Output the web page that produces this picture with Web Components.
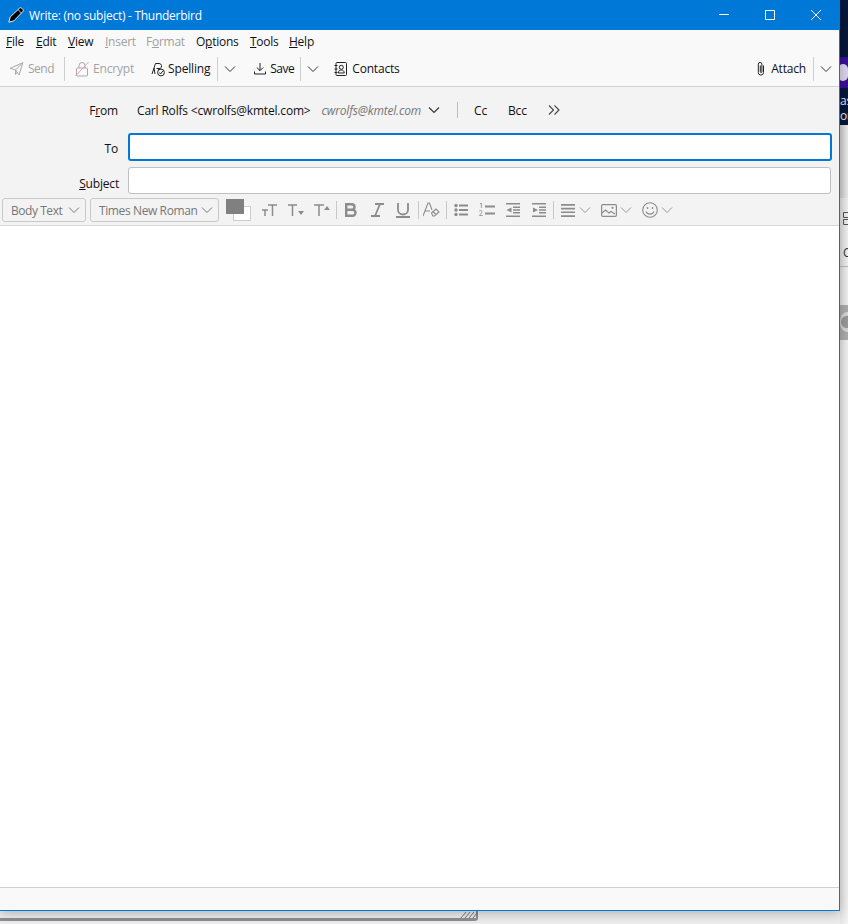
<!DOCTYPE html>
<html lang="en"><head><meta charset="utf-8"><title>Write: (no subject) - Thunderbird</title>
<style>
html,body{margin:0;padding:0;background:#e9e9e9}
body{font-family:"Open Sans","Liberation Sans",sans-serif;font-size:12px;letter-spacing:-.18px;color:#1a1a1a}
</style></head><body>
<desk-top>
  <compose-window>
    <title-bar slot="title">Write: (no subject) - Thunderbird</title-bar>
    <menu-bar slot="menu"></menu-bar>
    <compose-toolbar slot="tools"></compose-toolbar>
    <compose-headers slot="head"></compose-headers>
    <format-toolbar slot="format"></format-toolbar>
    <status-bar slot="status"></status-bar>
  </compose-window>
</desk-top>
<script>
function el(name,css,html){
  customElements.define(name,class extends HTMLElement{
    constructor(){super();const r=this.attachShadow({mode:'open'});r.innerHTML='<style>'+css+'</style>'+html;}
  });
}
const chev=(w=10,c='#333')=>`<svg width="${w+2}" height="8" viewBox="0 0 12 8" fill="none" stroke="${c}" stroke-width="1"><path d="M1 1.5 6 6.500 11 1.500"/></svg>`;

el('desk-top',`
:host{display:block;position:relative;width:848px;height:924px;overflow:hidden;background:#eeeeee}
.back{position:absolute;left:0;top:0;width:478px;height:921px;border:solid #8f8f96;border-width:0 2px 3px 0;border-radius:0 0 3px 0;box-sizing:border-box}
.grip{position:absolute;left:460px;top:911px}
.side{position:absolute;left:840px;top:0;width:8px;height:924px;background:#f3f3f3;display:flex;flex-direction:column;overflow:hidden;color:#222}
.side div{flex:none;overflow:hidden}
.navy{height:57px;background:#06173a}
.purple{height:31px;background:#3a0f99;position:relative}
.purple i{position:absolute;left:-2px;top:7px;width:10px;height:17px;border-radius:8px;background:#dcd6ee}
.txt{height:37px;background:#06173a;color:#e8e8f0;line-height:15px;padding-top:5px;box-sizing:border-box;white-space:pre}
.grad{height:73px;background:linear-gradient(90deg,#cfcfcf,#eee)}
.pale{height:69px;background:linear-gradient(90deg,#e2e2e2,#f3f3f3);padding:14px 0 0 3px;color:#333;border-bottom:1px solid #bbb;box-sizing:border-box}
.pale svg{display:block}
.pale span{display:block;margin-top:20px;line-height:16px}
.blank{height:38px;background:linear-gradient(90deg,#e2e2e2,#f3f3f3)}
.knob{height:35px;background:#adadad;position:relative}
.knob i{position:absolute;left:0;top:7px;width:14px;height:20px;border-radius:50%;background:radial-gradient(circle,#999 0 45%,#d9d9d9 55%)}
.rest{flex:1!important;background:linear-gradient(90deg,#e6e6e6,#f3f3f3)}
::slotted(*){position:absolute;left:0;top:0}
`,`<div class="back"></div>
<svg class="grip" width="18" height="8" viewBox="0 0 18 8" stroke="#777" stroke-width="1"><path d="M1 7 6 1M5 7 10 1M9 7 14 1M13 7 17 2"/></svg>
<div class="side">
<div class="navy"></div><div class="purple"><i></i></div><div class="txt">as
or</div><div class="grad"></div><div class="pale"><svg width="5" height="13" viewBox="0 0 5 13" fill="none" stroke="#555"><path d="M5 .5H.5v5H5M5 7.500H.5v5H5"/></svg><span>C</span></div><div class="blank"></div><div class="knob"><i></i></div><div class="rest"></div>
</div><slot></slot>`);

el('compose-window',`
:host{display:flex;flex-direction:column;width:840px;height:911px;box-sizing:border-box;background:#fff;border:solid #0078d7;border-width:0 1px 1px 0;box-shadow:0 2px 12px rgba(0,0,0,.28)}
.body{flex:1;background:#fff}
`,`<slot name="title"></slot><slot name="menu"></slot><slot name="tools"></slot><slot name="head"></slot><slot name="format"></slot><div class="body"></div><slot name="status"></slot>`);

el('title-bar',`
:host{display:flex;align-items:center;height:30px;background:#0078d7;color:#fff;font-size:12px;flex:none}
.ic{margin:0 5px 0 8px;flex:none;display:block}
.t{flex:1;white-space:nowrap;letter-spacing:-.27px}
.b{width:46px;height:30px;display:flex;align-items:center;justify-content:center}
`,`<svg class="ic" width="16" height="16" viewBox="0 0 16 16"><path d="M.8 15.200 2.200 10 11.500 1.200a1.600 1.600 0 0 1 2.200 0l1.100 1.100a1.600 1.600 0 0 1 0 2.200L6 13.800z" fill="#000" stroke="#fff" stroke-width=".9" stroke-linejoin="round"/><path d="M10.200 2.800 13.300 5.900" stroke="#fff" stroke-width=".8"/></svg>
<span class="t"><slot></slot></span>
<span class="b"><svg width="10" height="10" viewBox="0 0 10 10"><path d="M0 4.500h10" stroke="#fff"/></svg></span>
<span class="b"><svg width="10" height="10" viewBox="0 0 10 10"><path d="M.5.500h9v9h-9z" fill="none" stroke="#fff"/></svg></span>
<span class="b"><svg width="10" height="10" viewBox="0 0 10 10"><path d="M0 0 10 10M10 0 0 10" stroke="#fff" stroke-width="1"/></svg></span>`);

el('menu-bar',`
:host{display:grid;grid-template-columns:30px 32px 37px 41px 50px 54px 39px auto;height:22px;padding:0 0 0 6px;align-items:center;background:#f9f9f9;color:#111;flex:none;white-space:nowrap;letter-spacing:-.25px}
.d{color:#a0a0a0}
`,`<span><u>F</u>ile</span><span><u>E</u>dit</span><span><u>V</u>iew</span><span class="d"><u>I</u>nsert</span><span class="d">F<u>o</u>rmat</span><span>O<u>p</u>tions</span><span><u>T</u>ools</span><span><u>H</u>elp</span>`);

el('compose-toolbar',`
:host{display:flex;align-items:center;height:35px;box-sizing:border-box;padding:0 7px 1px 9px;background:#f9f9f9;border-bottom:1px solid #d2d2d4;color:#111;flex:none;white-space:nowrap}
.i{flex:none;display:block;margin-right:4px}
.d{color:#a3a3a3}
.n{letter-spacing:-.5px}
.s{width:1px;height:24px;background:#cfcfcf;flex:none}
.c{display:flex;flex:none}
.sp{flex:1}
`,`<svg class="i" style="margin-right:4px" width="15" height="14" viewBox="0 0 14 14" fill="none" stroke="#a8a8a8" stroke-width="1"><path d="M.7 6.300 13.300.7 9.600 13 6 8z"/><path d="M13.300.7 6 8v4.500l1.800-2.400"/></svg><span class="d n">Send</span>
<span class="s" style="margin:0 10px 0 10px"></span>
<svg class="i" width="14" height="16" viewBox="0 0 14 16" fill="none" stroke="#a8a8a8"><rect x="1.500" y="7" width="11" height="8" rx="1"/><path d="M4 7V4.500a3 3 0 0 1 6 0V7"/><path d="M.5 15 13.500 1" stroke="#eba0a8"/></svg><span class="d">Encrypt</span>
<svg class="i" style="margin-left:17px;margin-right:3px" width="14" height="16" viewBox="0 0 14 16" fill="none" stroke="#222" stroke-width="1"><path d="M1 13 4.500 2.500h3.500a2.600 2.600 0 0 1 1 5H5.500M7.500 7.500 8 9M3 7l1 6"/><circle cx="10" cy="11.500" r="3.400"/><path d="M8.300 11.500 9.600 13 11.800 10"/></svg><span>Spelling</span>
<span class="s" style="margin:0 6px 0 7px"></span><span class="c">${chev()}</span>
<svg class="i" style="margin-left:18px;margin-right:4px" width="12" height="13" viewBox="0 0 12 13" fill="none" stroke="#222"><path d="M6 1v7.500M2.800 5.500 6 8.700 9.200 5.500"/><path d="M.5 9.500v2.500h11V9.500"/></svg><span class="n">Save</span>
<span class="s" style="margin:0 6px 0 6px"></span><span class="c">${chev()}</span>
<svg class="i" style="margin-left:15px;margin-right:5px" width="13" height="14" viewBox="0 0 13 14" fill="none" stroke="#222"><rect x="2" y=".5" width="10.500" height="13" rx="1"/><path d="M.5 3.500H3.500M.5 7H3.500M.5 10.500H3.500"/><circle cx="7.300" cy="5.300" r="2"/><path d="M4.300 11c0-4 6-4 6 0z"/></svg><span>Contacts</span>
<span class="sp"></span>
<svg class="i" style="margin-right:5px" width="10" height="15" viewBox="0 0 10 15" fill="none" stroke="#222"><path d="M7.500 4.500v7a2.600 2.600 0 0 1-5.200 0V3.200a1.800 1.800 0 0 1 3.600 0v7.500a.8.8 0 0 1-1.600 0V4.500"/></svg><span>Attach</span>
<span class="s" style="margin:0 6px 0 7px"></span><span class="c">${chev()}</span>`);

el('compose-headers',`
:host{display:block;background:#f3f3f3;padding:10px 8px 0 0;flex:none;color:#111;white-space:nowrap}
.r{display:flex;align-items:center}
.l{width:118px;text-align:right;flex:none}
.from{height:26px;margin-bottom:10px}
.v{margin-left:19px;flex:none}
.m{margin-left:11px;font-style:italic;color:#767676;flex:none}
.s{width:1px;height:16px;background:#bbb;margin:0 16px 0 17px;flex:none}
.e{display:block;box-sizing:border-box;background:#fff;border-radius:3px;flex:1}
.to{height:28px;margin-left:10px;border:2px solid #0078d7;margin-right:-1px}
.su{height:27px;margin-left:9px;border:1px solid #c0c0c0}
.more{margin-left:21px}
.lo{padding-top:2px}
.lo2{padding-top:5px;width:119px}
`,`<div class="r from"><span class="l">F<u>r</u>om</span><span class="v">Carl Rolfs &lt;cwrolfs@kmtel.com&gt;</span><span class="m">cwrolfs@kmtel.com</span><svg style="margin-left:7px" width="12" height="8" viewBox="0 0 12 8" fill="none" stroke="#333" stroke-width="1.100"><path d="M1 1.500 6 6.500 11 1.500"/></svg><span class="s"></span><span>Cc</span><span style="margin-left:21px">Bcc</span><svg class="more" width="12" height="10" viewBox="0 0 12 10" fill="none" stroke="#444" stroke-width="1.100"><path d="M1 .5 5.500 5 1 9.500M6.500 .5 11 5 6.500 9.500"/></svg></div>
<div class="r" style="margin-bottom:6px"><span class="l lo">To</span><span class="e to"></span></div>
<div class="r"><span class="l lo2"><u>S</u>ubject</span><span class="e su"></span></div>`);

const g='#8c8c8c';
el('format-toolbar',`
:host{display:flex;align-items:center;height:32px;box-sizing:border-box;padding:4px 0 3px 2px;background:#f3f3f3;border-bottom:1px solid #d6d6d6;flex:none;white-space:nowrap;color:#777}
.sel{display:flex;align-items:center;justify-content:space-between;box-sizing:border-box;height:24px;border:1px solid #c8c8c8;border-radius:3px;padding:0 5px 0 8px;background:#f3f3f3;flex:none}
svg{display:block;flex:none}
.col{position:relative;width:25px;height:22px;margin-left:7px;flex:none}
.fg{position:absolute;left:0;top:0;width:18px;height:15px;background:#808080;z-index:1}
.bg{position:absolute;left:7px;top:7px;width:18px;height:15px;background:#fff;border:1px solid #ccc;box-sizing:border-box}
.s{width:1px;height:18px;background:#c8c8c8;flex:none}
`,`<span class="sel" style="width:84px;letter-spacing:-.45px">Body Text${chev(10,'#777')}</span>
<span class="sel" style="width:129px;margin-left:4px;letter-spacing:-.39px">Times New Roman${chev(10,'#777')}</span>
<span class="col"><span class="bg"></span><span class="fg"></span></span>
<svg style="margin-left:11px" width="15" height="14" viewBox="0 0 15 14" fill="none" stroke="${g}" stroke-width="1.500"><path d="M6 2h9M10.500 2v11M0 7h6M3 7v6"/></svg>
<svg style="margin-left:11px" width="16" height="14" viewBox="0 0 16 14" fill="none" stroke="${g}" stroke-width="1.500"><path d="M0 2h9M4.500 2v11"/><path d="M10 8h6l-3 4z" fill="${g}" stroke="none"/></svg>
<svg style="margin-left:10px" width="16" height="14" viewBox="0 0 16 14" fill="none" stroke="${g}" stroke-width="1.500"><path d="M0 2h10M5 2v11"/><path d="M10 7h6l-3-4z" fill="${g}" stroke="none"/></svg>
<span class="s" style="margin:0 7px 0 6px"></span>
<svg width="14" height="14" viewBox="0 0 14 14" fill="none" stroke="${g}" stroke-width="2.400"><path d="M2.200 1.200v11.600h6.300a3 3 0 0 0 0-6H2.200h5.500a2.800 2.800 0 0 0 0-5.600z"/></svg>
<svg style="margin-left:13px" width="13" height="14" viewBox="0 0 13 14" fill="none" stroke="${g}" stroke-width="1.800"><path d="M4 1h9M0 13h9M9 1 4 13"/></svg>
<svg style="margin-left:12px" width="14" height="15" viewBox="0 0 14 15" fill="none" stroke="${g}" stroke-width="1.800"><path d="M2 0v7a5 4.500 0 0 0 10 0V0M0 14h14"/></svg>
<span class="s" style="margin:0 4px 0 8px"></span>
<svg width="17" height="16" viewBox="0 0 17 16" fill="none" stroke="${g}" stroke-width="1.100"><path d="M0 14 5 1h1.500L9 8M2 9h5"/><path d="M8.500 11 13 7l3 3-4.500 4H9.800z"/><path d="M10 9.500 13 12.500"/></svg>
<span class="s" style="margin:0 7px 0 6px"></span>
<svg width="14" height="14" viewBox="0 0 14 14" fill="${g}"><circle cx="2" cy="2.500" r="1.700"/><circle cx="2" cy="7" r="1.700"/><circle cx="2" cy="11.500" r="1.700"/><path d="M5 1.500h9v2H5zM5 6h9v2H5zM5 10.500h9v2H5z"/></svg>
<svg style="margin-left:11px" width="16" height="14" viewBox="0 0 16 14" fill="${g}"><path d="M6 2.500h10v2H6zM6 9.500h10v2H6z"/><path d="M2.400 0v5M1 1l1.400-1M.2 8.200c1-1.500 3.300-.8 2.800.8L.5 12.500h3.300" fill="none" stroke="${g}" stroke-width=".8"/></svg>
<svg style="margin-left:11px" width="14" height="14" viewBox="0 0 14 14" fill="${g}"><path d="M0 0h14v1.500H0zM7 3.500h7V5H7zM7 6.300h7v1.500H7zM7 9.100h7v1.500H7zM0 12.500h14V14H0zM5.500 4.500V9.500L.5 7z"/></svg>
<svg style="margin-left:12px" width="14" height="14" viewBox="0 0 14 14" fill="${g}"><path d="M0 0h14v1.500H0zM7 3.500h7V5H7zM7 6.300h7v1.500H7zM7 9.100h7v1.500H7zM0 12.500h14V14H0zM1 4.500V9.500L6 7z"/></svg>
<span class="s" style="margin:0 7px"></span>
<svg width="14" height="13" viewBox="0 0 14 13" fill="${g}"><path d="M0 0h14v1.700H0zM0 3.700h14v1.700H0zM0 7.400h14v1.700H0zM0 11.200h14v1.700H0z"/></svg>
<span style="margin-left:4px">${chev(10,'#999')}</span>
<svg style="margin-left:10px" width="16" height="13" viewBox="0 0 16 13" fill="none" stroke="${g}" stroke-width="1.200"><rect x=".6" y=".6" width="14.800" height="11.800" rx="1.200"/><path d="M1 9l3.500-3 3.500 3 2-1.500 4 2.500"/><circle cx="11.500" cy="3.800" r="1.100" fill="${g}" stroke="none"/></svg>
<span style="margin-left:3px">${chev(10,'#999')}</span>
<svg style="margin-left:10px" width="16" height="16" viewBox="0 0 16 16" fill="none" stroke="${g}" stroke-width="1.100"><circle cx="8" cy="8" r="7.300"/><circle cx="5.500" cy="6" r=".9" fill="${g}" stroke="none"/><circle cx="10.500" cy="6" r=".9" fill="${g}" stroke="none"/><path d="M4 9.500c1.500 3.500 6.500 3.500 8 0"/></svg>
<span style="margin-left:3px">${chev(10,'#999')}</span>`);

el('status-bar',`
:host{display:block;height:23px;box-sizing:border-box;background:#f9f9f9;border-top:1px solid #d0d0d0;flex:none}
`,``);
</script>
</body></html>
